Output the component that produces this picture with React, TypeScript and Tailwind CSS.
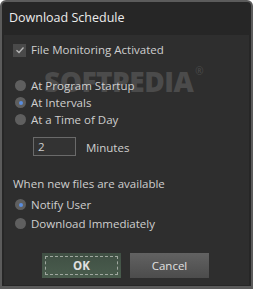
import React from "react";

function Radio({ checked, label }: { checked?: boolean; label: string }) {
    return (
        <div className="flex items-center h-[17px]">
            <span className="w-[11px] h-[11px] rounded-full bg-[#5f5f5f] flex items-center justify-center ml-[2px]">
                {checked && <span className="w-[4px] h-[4px] rounded-full bg-[#5a8ee0]" />}
            </span>
            <span className="ml-[5px]">{label}</span>
        </div>
    );
}

export default function App() {
    return (
        <div
            className="w-[253px] h-[289px] bg-[#5b5b5b] rounded-t-[6px] p-[2px] pb-[3px] flex flex-col text-[11.5px] text-[#cfcfcf]"
            style={{ fontFamily: '"Open Sans", "Noto Sans", sans-serif' }}
        >
            <div className="bg-[#262626] rounded-t-[4px] flex-1 flex flex-col">
                <div className="h-[33px] flex items-center pl-[7px] text-[12.5px] text-[#ececec]">
                    Download Schedule
                </div>
                <div className="relative overflow-hidden flex-1 bg-[#2e2e2e] mx-[2px] mb-[1px] flex flex-col pl-[9px] pt-[8px]">
                    <div className="absolute left-[40px] top-[32px] flex items-start text-[#4b4b4b] pointer-events-none select-none">
                        <span className="text-[28px] leading-none font-extrabold tracking-[-0.5px]">SOFTPEDIA</span>
                        <span className="text-[10px] leading-none ml-[2px] -mt-[1px]">®</span>
                    </div>
                    <div className="relative flex items-center h-[14px]">
                        <span className="w-[13px] h-[13px] bg-[#4a4a4a] flex items-center justify-center">
                            <svg width="10" height="10" viewBox="0 0 10 10">
                                <path d="M1.5 5.2 L4 7.5 L8.5 2.5" stroke="#b8b8b8" strokeWidth="1.3" fill="none" />
                            </svg>
                        </span>
                        <span className="ml-[5px]">File Monitoring Activated</span>
                    </div>
                    <div className="mt-[20px] flex flex-col relative">
                        <Radio label="At Program Startup" />
                        <Radio checked label="At Intervals" />
                        <Radio label="At a Time of Day" />
                    </div>
                    <div className="flex items-center mt-[9px] ml-[20px]">
                        <div className="w-[43px] h-[19px] border border-[#6a6a6a] bg-[#333] pl-[4px] flex items-center">
                            2
                        </div>
                        <span className="ml-[10px] mt-[2px]">Minutes</span>
                    </div>
                    <div className="mt-[19px] h-[16px] flex items-center">When new files are available</div>
                    <div className="mt-[5px] flex flex-col gap-[2px]">
                        <Radio checked label="Notify User" />
                        <Radio label="Download Immediately" />
                    </div>
                    <div className="flex gap-[9px] mt-[21px] ml-[29px]">
                        <button className="w-[79px] h-[25px] bg-gradient-to-b from-[#405044] to-[#4a5d4e] flex items-center justify-center p-[3px]">
                            <span className="w-full h-full border border-dashed border-[#a0a8a0] flex items-center justify-center font-bold text-[#e0e0e0]">
                                OK
                            </span>
                        </button>
                        <button className="w-[79px] h-[25px] bg-gradient-to-b from-[#626262] to-[#4c4c4c] flex items-center justify-center text-[#e0e0e0]">
                            Cancel
                        </button>
                    </div>
                </div>
            </div>
        </div>
    );
}
